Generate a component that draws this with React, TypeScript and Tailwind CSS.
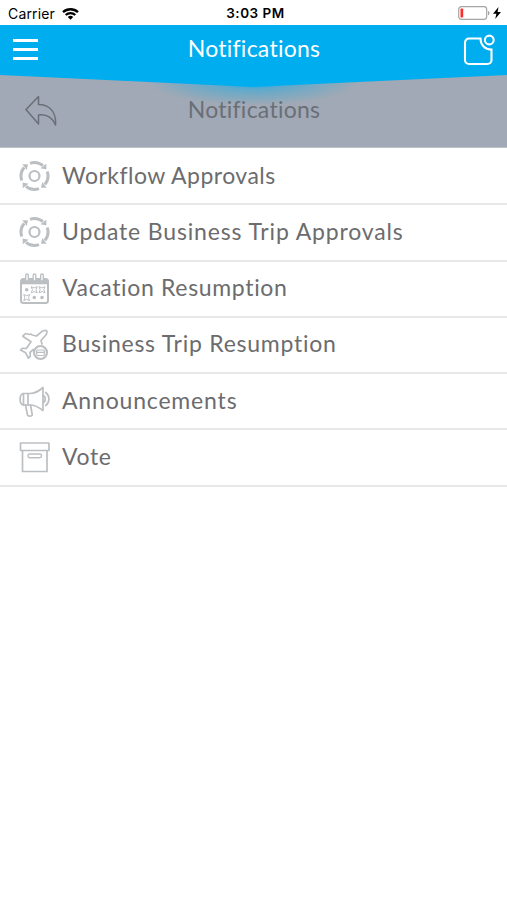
import React from 'react'
import { clsx } from 'clsx'

type MenuItem = {
    label: string
    icon: React.ReactNode
    className: string
}

const iconProps = {
    viewBox: '0 0 32 32',
    fill: 'none',
    stroke: 'currentColor',
    strokeWidth: 1.7,
    className: 'h-8 w-8 shrink-0 text-[#bcbfc2]',
}

const WorkflowIcon = () => (
    <svg {...iconProps}>
        <circle cx="16.5" cy="16" r="5" strokeWidth="2.2" />
        {[0, 90, 180, 270].map((angle) => (
            <g key={angle} transform={`rotate(${angle} 16.5 16)`}>
                <path d="M12 3.3A13.4 13.4 0 0 1 25 5.600" strokeWidth="3" />
                <path d="M28.300 3.800 28.300 9.500 22.500 8.200z" fill="currentColor" stroke="none" />
            </g>
        ))}
    </svg>
)

const CalendarIcon = () => (
    <svg {...iconProps}>
        <rect x="3" y="6" width="27" height="24" rx="2.5" strokeWidth="2" />
        <path d="M3 7h27v4.300H3z" fill="currentColor" stroke="none" />
        <g strokeWidth="1.3" fill="#fff">
            <rect x="7.7" y="1" width="2.6" height="7" rx="1.3" />
            <rect x="15.2" y="1" width="2.6" height="7" rx="1.3" />
            <rect x="22.7" y="1" width="2.6" height="7" rx="1.3" />
        </g>
        <g strokeWidth="1" strokeLinejoin="round">
            <path d="m13.2 13.700 3 1.200 3-1.200-1.200 3.100 1.200 3-3-1.200-3 1.200 1.200-3z" />
            <path d="m21 13.700 3 1.200 3-1.200-1.200 3.100 1.200 3-3-1.200-3 1.200 1.200-3z" />
            <path d="m5.700 21.500 3 1.200 3-1.200-1.200 3.100 1.200 3-3-1.200-3 1.200 1.200-3z" />
        </g>
        <g fill="currentColor" stroke="none">
            <circle cx="8.700" cy="16.800" r="1.800" />
            <circle cx="16.300" cy="24.500" r="1.800" />
            <circle cx="24" cy="24.500" r="1.800" />
        </g>
    </svg>
)

const PlaneIcon = () => (
    <svg {...iconProps} strokeLinejoin="round" strokeLinecap="round">
        <path d="M18.500 7 23.500 2.800c2-1.500 4.500-1.700 5.200-1s.3 3.200-1.500 5L23 11.500l1 3.500M18.500 7 14 6l-1-1-1.500.500L7.500 4.500 4.800 7.200l8.200 5.600-4.700 6.700-4-.2-1.800 1.700 5.100 2.700 2.700 5.500 2-1.900-.3-3.800 3.300-3" />
        <circle cx="22.500" cy="23.500" r="6.500" strokeWidth="2.200" />
        <rect x="18.700" y="21" width="7.600" height="5.500" rx="1" strokeWidth="1.200" />
        <path d="M18.700 23.300h7.600" strokeWidth="1.200" />
    </svg>
)

const MegaphoneIcon = () => (
    <svg {...iconProps} strokeLinejoin="round" strokeLinecap="round">
        <path d="M12 8.500H5.500C1 9 1 19.500 5.500 20H12c4 0 8.500 2 13 5.500V2.500C20.500 6.500 16 8.500 12 8.500z" />
        <path d="M10 8.500V20M5.500 8.500V20" />
        <path d="M25 10.500c3 .5 3 6.500 0 7M27.700 7.500c4.300 3.500 4.300 9.500 0 13" />
        <path d="m7.500 20 2 10c.4 1.500 5 1.500 4.700-.5L12.500 20" />
    </svg>
)

const BoxIcon = () => (
    <svg {...iconProps}>
        <rect x="2.500" y="2" width="28.500" height="7.500" rx=".5" />
        <path d="M4.500 9.500V30.500H29V9.500" />
        <rect x="10" y="13" width="13.500" height="3.800" rx="1.700" strokeWidth="1.400" />
    </svg>
)

const items: MenuItem[] = [
    { label: 'Workflow Approvals', icon: <WorkflowIcon />, className: 'tracking-[0.48px]' },
    { label: 'Update Business Trip Approvals', icon: <WorkflowIcon />, className: 'tracking-[0.85px]' },
    { label: 'Vacation Resumption', icon: <CalendarIcon />, className: 'tracking-[0.66px]' },
    { label: 'Business Trip Resumption', icon: <PlaneIcon />, className: 'tracking-[0.75px]' },
    { label: 'Announcements', icon: <MegaphoneIcon />, className: 'tracking-[0.82px]' },
    { label: 'Vote', icon: <BoxIcon />, className: 'tracking-[0.6px]' },
]

const StatusBar = () => (
    <div className="grid h-[25px] grid-cols-3 items-center bg-white pt-[3px] font-[Inter,sans-serif] text-black">
        <div className="flex items-center gap-[7px] pl-2">
            <span className="text-[14px] leading-none tracking-[0.15px]">Carrier</span>
            <svg viewBox="0 0 17 13" className="h-[13px] w-[17px] -translate-y-px" fill="none" stroke="currentColor" strokeWidth="2.300">
                <path d="M1 5.200a11 11 0 0 1 15 0M3.700 8a7 7 0 0 1 9.600 0" />
                <path d="m8.500 12.700 2.700-2.800a4 4 0 0 0-5.400 0z" fill="currentColor" stroke="none" />
            </svg>
        </div>
        <span className="pl-[4px] text-center text-[13.500px] font-semibold leading-none tracking-[0.500px]">3:03 PM</span>
        <div className="flex -translate-y-px items-center justify-end gap-[3px] pr-[6px]">
            <svg viewBox="0 0 32 14" className="h-[14px] w-8" fill="none">
                <rect x=".7" y=".7" width="28" height="12.600" rx="2.800" stroke="#a5a5a5" strokeWidth="1.200" />
                <path d="M30 4.700c2 .8 2 3.800 0 4.600z" fill="#a5a5a5" />
                <rect x="2.500" y="2.500" width="2.700" height="9" rx=".8" fill="#fb2f2b" />
            </svg>
            <svg viewBox="0 0 8 12" className="h-3 w-2" fill="currentColor">
                <path d="M5.500 0 0 6.800h3.400L2.200 12 8 4.900H4.600z" />
            </svg>
        </div>
    </div>
)

const Header = () => (
    <header className="relative z-10 h-[62px] bg-[#00aeef] text-white [clip-path:polygon(0_0,100%_0,100%_50px,54%_61px,50%_62px,46%_61px,0_50px)]">
        <div className="grid h-[50px] grid-cols-[60px_1fr_60px] items-center">
            <button className="flex flex-col gap-[6px] pb-px pl-[13px]" aria-label="Menu">
                <span className="h-[3px] w-[25px] bg-white" />
                <span className="h-[3px] w-[25px] bg-white" />
                <span className="h-[3px] w-[25px] bg-white" />
            </button>
            <h1 className="pb-[3px] pl-px text-center text-[23px] leading-none tracking-[0.250px]">Notifications</h1>
            <svg viewBox="0 0 36 32" className="ml-[13px] h-8 w-9" fill="none" stroke="currentColor" strokeWidth="2.100">
                <path d="M20.500 4.500H9a4 4 0 0 0-4 4V26a4 4 0 0 0 4 4H27.500a4 4 0 0 0 4-4V15.500c-6.500 0-11-4.500-11-11z" />
                <circle cx="29.300" cy="6" r="4.400" />
            </svg>
        </div>
    </header>
)

const SubHeader = () => (
    <div className="-mt-3 grid h-[73px] grid-cols-[70px_1fr_70px] items-center border-b border-[#bdc2c9] bg-[#a0a9b5] bg-[radial-gradient(ellipse_105px_24px_at_50%_6px,#00aeef_0%,#60a9cb_35%,transparent_100%)] text-[#6a6f77]">
        <svg viewBox="0 0 32 32" className="ml-[25px] h-8 w-8" fill="none" stroke="currentColor" strokeWidth="1.500" strokeLinejoin="round">
            <path d="M13.500 1.500 1 14.500 13.500 29V20c7-.8 13.500 1.500 17 10C31.500 17 24.500 9.500 13.500 9.500z" />
        </svg>
        <h2 className="pb-[3px] pl-px text-center text-[23px] leading-none tracking-[0.250px]">Notifications</h2>
    </div>
)

const App = () => (
    <div className="min-h-screen w-full bg-white font-[Lato,sans-serif]">
        <StatusBar />
        <Header />
        <SubHeader />
        <ul className="pt-px">
            {items.map((item) => (
                <li key={item.label} className="flex h-[56.250px] items-center gap-3 border-b-2 border-[#e8e8ea] pl-[18px]">
                    {item.icon}
                    <span className={clsx('whitespace-nowrap pb-[2px] text-[23px] leading-none text-[#6c6c6e]', item.className)}>
                        {item.label}
                    </span>
                </li>
            ))}
        </ul>
    </div>
)

export default App
